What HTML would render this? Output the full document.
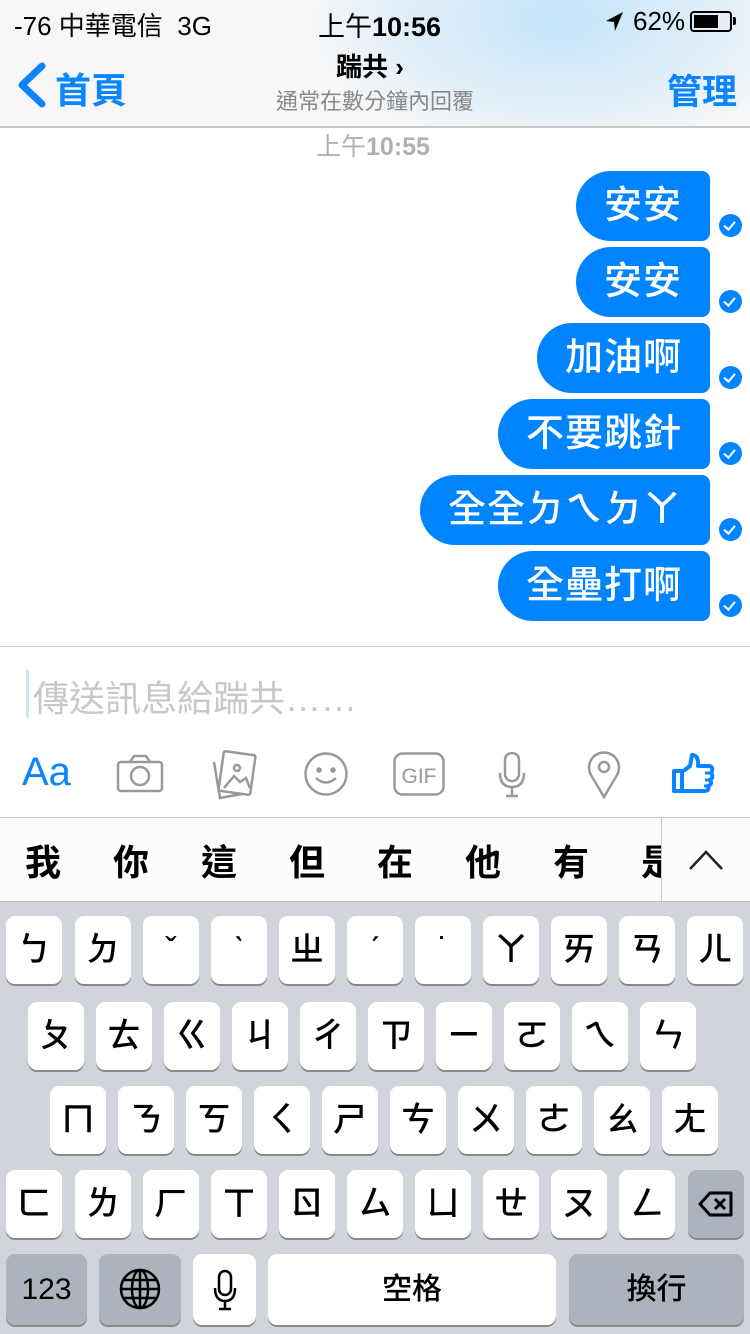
<!DOCTYPE html>
<html><head><meta charset="utf-8"><style>
*{margin:0;padding:0;box-sizing:border-box}
body{width:750px;height:1334px;overflow:hidden;background:#fff;font-family:"Liberation Sans","Noto Sans CJK TC",sans-serif;position:relative}
.a{position:absolute}
.hdr{left:0;top:0;width:750px;height:128px;background:radial-gradient(ellipse 260px 140px at 560px 20px,#c4e4fb 0%,#dcedf9 50%,rgba(246,247,248,0) 100%),#f7f7f7;border-bottom:2px solid #c8c8c8}
.b{background:#0084ff;color:#fff;height:70px;border-radius:35px 8px 8px 35px;font-size:38px;line-height:70px;padding:0 28px;right:40px;white-space:nowrap;letter-spacing:1px;font-weight:500}
.ck{width:23px;height:23px;border-radius:50%;background:#0084ff;left:719px}
.ck:after{content:"";position:absolute;left:7px;top:5px;width:5px;height:9px;border:solid #fff;border-width:0 2.5px 2.5px 0;transform:rotate(40deg)}
.kb{left:0;top:902px;width:750px;height:432px;background:#d1d5db}
.k{background:#fff;border-radius:9px;box-shadow:0 2px 0 #898a8d;width:56px;height:68px;text-align:center;line-height:68px;font-size:34px;color:#000;font-weight:500}
.g{background:#acb3bd}
.sg{font-size:36px;top:834px;font-weight:bold}
</style></head><body>
<div class="a hdr"></div>
<div class="a" style="left:14px;top:6px;font-size:26px">-76 中華電信 &nbsp;3G</div>
<div class="a" style="left:318px;top:5px;font-size:27px"><span>上午</span><b>10:56</b></div>
<svg class="a" style="left:603px;top:10px" width="22" height="24"><path d="M20 2 L3 11 L11 12 L12 21 Z" fill="#000"/></svg>
<div class="a" style="left:633px;top:6px;font-size:26px">62%</div>
<div class="a" style="left:690px;top:11px;width:42px;height:21px;border:2px solid #000;border-radius:4px"><div style="margin:2px;width:24px;height:13px;background:#000"></div></div>
<div class="a" style="left:733px;top:17px;width:3px;height:8px;background:#000;border-radius:0 2px 2px 0"></div>
<svg class="a" style="left:14px;top:62px" width="34" height="46"><path d="M28 4 L8 23 L28 42" fill="none" stroke="#0a84ff" stroke-width="7" stroke-linecap="round" stroke-linejoin="round"/></svg>
<div class="a" style="left:55px;top:62px;font-size:36px;color:#0a84ff;font-weight:bold">首頁</div>
<div class="a" style="left:336px;top:47px;font-size:26px;font-weight:bold">踹共 ›</div>
<div class="a" style="left:276px;top:84px;font-size:22px;color:#888">通常在數分鐘內回覆</div>
<div class="a" style="left:667px;top:64px;font-size:35px;color:#0a84ff;font-weight:bold">管理</div>
<div class="a" style="left:316px;top:127px;font-size:25px;color:#b0b0b0"><span>上午</span><b>10:55</b></div>

<div class="a b" style="top:171px">安安</div><div class="a ck" style="top:214px"></div>
<div class="a b" style="top:247px">安安</div><div class="a ck" style="top:290px"></div>
<div class="a b" style="top:323px">加油啊</div><div class="a ck" style="top:366px"></div>
<div class="a b" style="top:399px">不要跳針</div><div class="a ck" style="top:442px"></div>
<div class="a b" style="top:475px">全全ㄉㄟㄉㄚ</div><div class="a ck" style="top:518px"></div>
<div class="a b" style="top:551px">全壘打啊</div><div class="a ck" style="top:594px"></div>

<div class="a" style="left:0;top:646px;width:750px;height:1px;background:#c8c8c8"></div>
<div class="a" style="left:26px;top:670px;width:3px;height:48px;background:#cfe4fb"></div>
<div class="a" style="left:33px;top:670px;font-size:36px;color:#c8c8c8">傳送訊息給踹共……</div>

<div class="a" style="left:22px;top:750px;font-size:40px;color:#0a84ff;font-weight:300">Aa</div>
<svg class="a" style="left:116px;top:754px" width="48" height="40" fill="none" stroke="#999" stroke-width="2.5"><rect x="2" y="8" width="44" height="29" rx="3"/><path d="M14 8 L18 2 H30 L34 8"/><circle cx="24" cy="22" r="9"/></svg>
<svg class="a" style="left:210px;top:750px" width="48" height="50" fill="none" stroke="#999" stroke-width="2.5"><path d="M4 12 L10 48 L32 44"/><rect x="11" y="3" width="32" height="40" rx="2" transform="rotate(8 27 23)"/><circle cx="27" cy="18" r="3"/><path d="M14 38 L24 26 L30 32 L36 28 L40 38"/></svg>
<svg class="a" style="left:303px;top:751px" width="46" height="46" fill="none" stroke="#999" stroke-width="2.5"><circle cx="23" cy="23" r="20.5"/><circle cx="16" cy="19" r="1.5" fill="#999"/><circle cx="30" cy="19" r="1.5" fill="#999"/><path d="M13 27 Q23 36 33 27"/></svg>
<svg class="a" style="left:393px;top:752px" width="52" height="44"><rect x="1.5" y="1.5" width="49" height="41" rx="8" fill="none" stroke="#999" stroke-width="2.5"/><text x="26" y="31" font-size="21" fill="#999" text-anchor="middle" font-family="Liberation Sans">GIF</text></svg>
<svg class="a" style="left:497px;top:751px" width="30" height="48" fill="none" stroke="#999" stroke-width="2.5"><rect x="8" y="2" width="14" height="28" rx="7"/><path d="M3 22 Q3 36 15 36 Q27 36 27 22 M15 36 V45 M9 45 H21"/></svg>
<svg class="a" style="left:586px;top:750px" width="36" height="50" fill="none" stroke="#999" stroke-width="2.5"><path d="M18 47 L5 25 A15 15 0 1 1 31 25 Z"/><circle cx="18" cy="17" r="5"/></svg>
<svg class="a" style="left:672px;top:752px" width="44" height="42" fill="none" stroke="#0a84ff" stroke-width="4" stroke-linejoin="round"><rect x="2" y="19" width="8" height="20"/><path d="M10 20 L18 14 L20 3 Q27 3 26 14 H38 Q42 16 39 21 Q42 25 38 28 Q41 32 36 34 Q38 39 32 39 H10"/><path d="M38 21 H33 M38 28 H33 M36 34 H32" stroke-width="3"/></svg>

<div class="a" style="left:0;top:817px;width:750px;height:1px;background:#c8c8c8"></div>
<div class="a" style="left:0;top:818px;width:750px;height:84px;background:#fcfcfc"></div>
<div class="a sg" style="left:25px">我</div><div class="a sg" style="left:113px">你</div><div class="a sg" style="left:201px">這</div><div class="a sg" style="left:289px">但</div><div class="a sg" style="left:377px">在</div><div class="a sg" style="left:465px">他</div><div class="a sg" style="left:553px">有</div>
<div class="a" style="left:641px;top:818px;width:20px;height:84px;overflow:hidden"><div class="a sg" style="left:0;top:16px">是</div></div>
<div class="a" style="left:661px;top:818px;width:1px;height:84px;background:#c8c8c8"></div>
<svg class="a" style="left:688px;top:848px" width="36" height="24"><path d="M2 21 L18 4 L34 21" fill="none" stroke="#222" stroke-width="2.5"/></svg>
<div class="a" style="left:0;top:901px;width:750px;height:1px;background:#b8b8b8"></div>

<div class="a kb"></div>
<div class="a k" style="left:6px;top:916px">ㄅ</div><div class="a k" style="left:75px;top:916px">ㄉ</div><div class="a k" style="left:143px;top:916px">ˇ</div><div class="a k" style="left:211px;top:916px">ˋ</div><div class="a k" style="left:279px;top:916px">ㄓ</div><div class="a k" style="left:347px;top:916px">ˊ</div><div class="a k" style="left:415px;top:916px">˙</div><div class="a k" style="left:483px;top:916px">ㄚ</div><div class="a k" style="left:551px;top:916px">ㄞ</div><div class="a k" style="left:619px;top:916px">ㄢ</div><div class="a k" style="left:687px;top:916px">ㄦ</div>
<div class="a k" style="left:28px;top:1002px">ㄆ</div><div class="a k" style="left:96px;top:1002px">ㄊ</div><div class="a k" style="left:164px;top:1002px">ㄍ</div><div class="a k" style="left:232px;top:1002px">ㄐ</div><div class="a k" style="left:300px;top:1002px">ㄔ</div><div class="a k" style="left:368px;top:1002px">ㄗ</div><div class="a k" style="left:436px;top:1002px">ㄧ</div><div class="a k" style="left:504px;top:1002px">ㄛ</div><div class="a k" style="left:572px;top:1002px">ㄟ</div><div class="a k" style="left:640px;top:1002px">ㄣ</div>
<div class="a k" style="left:50px;top:1086px">ㄇ</div><div class="a k" style="left:118px;top:1086px">ㄋ</div><div class="a k" style="left:186px;top:1086px">ㄎ</div><div class="a k" style="left:254px;top:1086px">ㄑ</div><div class="a k" style="left:322px;top:1086px">ㄕ</div><div class="a k" style="left:390px;top:1086px">ㄘ</div><div class="a k" style="left:458px;top:1086px">ㄨ</div><div class="a k" style="left:526px;top:1086px">ㄜ</div><div class="a k" style="left:594px;top:1086px">ㄠ</div><div class="a k" style="left:662px;top:1086px">ㄤ</div>
<div class="a k" style="left:6px;top:1170px">ㄈ</div><div class="a k" style="left:75px;top:1170px">ㄌ</div><div class="a k" style="left:143px;top:1170px">ㄏ</div><div class="a k" style="left:211px;top:1170px">ㄒ</div><div class="a k" style="left:279px;top:1170px">ㄖ</div><div class="a k" style="left:347px;top:1170px">ㄙ</div><div class="a k" style="left:415px;top:1170px">ㄩ</div><div class="a k" style="left:483px;top:1170px">ㄝ</div><div class="a k" style="left:551px;top:1170px">ㄡ</div><div class="a k" style="left:619px;top:1170px">ㄥ</div>
<div class="a k g" style="left:688px;top:1170px"><svg width="36" height="26" style="margin-top:21px" fill="none" stroke="#000" stroke-width="3"><path d="M12 2 H33 V24 H12 L2 13 Z" stroke-linejoin="round"/><path d="M17 8 L27 18 M27 8 L17 18"/></svg></div>
<div class="a k g" style="left:6px;top:1254px;width:81px;height:71px;line-height:71px;font-size:30px">123</div>
<div class="a k g" style="left:99px;top:1254px;width:82px;height:71px"><svg width="42" height="42" style="margin-top:14px" fill="none" stroke="#000" stroke-width="2.5"><circle cx="21" cy="21" r="19"/><ellipse cx="21" cy="21" rx="8" ry="19"/><path d="M21 2 V40 M2 21 H40 M5 12 H37 M5 30 H37"/></svg></div>
<div class="a k" style="left:193px;top:1254px;width:63px;height:71px"><svg width="24" height="42" style="margin-top:15px" fill="none" stroke="#000" stroke-width="2.5"><rect x="6" y="2" width="12" height="24" rx="6"/><path d="M2 19 Q2 32 12 32 Q22 32 22 19 M12 32 V40 M6 40 H18"/></svg></div>
<div class="a k" style="left:268px;top:1254px;width:288px;height:71px;line-height:71px;font-size:30px">空格</div>
<div class="a k g" style="left:569px;top:1254px;width:175px;height:71px;line-height:71px;font-size:30px">換行</div>
</body></html>
